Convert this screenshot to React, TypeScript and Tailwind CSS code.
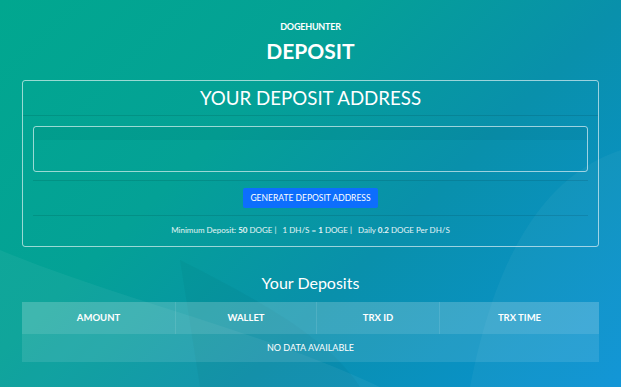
import React from "react";

const columns = ["AMOUNT", "WALLET", "TRX ID", "TRX TIME"];

function Backdrop() {
  return (
    <svg
      aria-hidden="true"
      className="pointer-events-none absolute inset-0 h-full w-full"
      viewBox="0 0 621 387"
      preserveAspectRatio="none"
    >
      <path d="M0 250 C 120 300, 260 330, 380 387 L 0 387 Z" fill="rgba(255,255,255,0.05)" />
      <path d="M621 150 C 560 170, 500 230, 470 387 L 621 387 Z" fill="rgba(255,255,255,0.04)" />
      <path d="M180 260 C 260 300, 330 340, 360 387 L 200 387 Z" fill="rgba(0,0,0,0.03)" />
    </svg>
  );
}

export default function App() {
  return (
    <main
      className="relative min-h-[387px] w-full overflow-hidden bg-[linear-gradient(135deg,#01a78f_0%,#04a196_35%,#0990ab_62%,#0a92d6_100%)] text-white"
      style={{ fontFamily: "Lato, 'Open Sans', sans-serif" }}
    >
      <Backdrop />

      <div className="relative flex flex-col items-center px-[22px] pt-[22px]">
        <p className="text-[9px] font-bold leading-[10px] tracking-tight">DOGEHUNTER</p>
        <h1 className="mt-[7px] text-[21px] font-bold leading-[24px]">DEPOSIT</h1>

        <section className="mt-[17px] w-full rounded-[3px] border border-white/60">
          <h2 className="border-b border-black/10 py-[6px] text-center text-[18.7px] leading-[22px]">
            YOUR DEPOSIT ADDRESS
          </h2>

          <div className="px-[10px] pt-[10px]">
            <div className="h-[46px] rounded-[3px] border border-white/60 shadow-[inset_0_13px_0_rgba(0,0,0,0.04)]" />
          </div>

          <div className="mx-[10px] mt-[8px] flex justify-center border-y border-black/10 py-[7px]">
            <button className="rounded-[2px] bg-[#0d6efd] px-[7px] py-[4px] text-[8.5px] leading-[12px] text-white">
              GENERATE DEPOSIT ADDRESS
            </button>
          </div>

          <p className="pb-[10px] pt-[9px] text-center text-[8px] leading-[11px] text-white/90">
            Minimum Deposit: <b>50</b> DOGE |&nbsp;&nbsp; 1 DH/S = <b>1</b> DOGE |&nbsp;&nbsp; Daily{" "}
            <b>0.2</b> DOGE Per DH/S
          </p>
        </section>

        <h2 className="mt-[26px] text-[16px] leading-[20px]">Your Deposits</h2>

        <div className="mt-[9px] w-full text-center">
          <div className="grid grid-cols-[153px_141px_123px_1fr] bg-white/20">
            {columns.map((col, i) => (
              <div
                key={col}
                className={`py-[11px] text-[9.5px] font-bold leading-[10px] ${i > 0 ? "border-l border-white/10" : ""}`}
              >
                {col}
              </div>
            ))}
          </div>
          <div className="bg-white/10 py-[9px] text-[9px] leading-[10px]">NO DATA AVAILABLE</div>
        </div>
      </div>
    </main>
  );
}
